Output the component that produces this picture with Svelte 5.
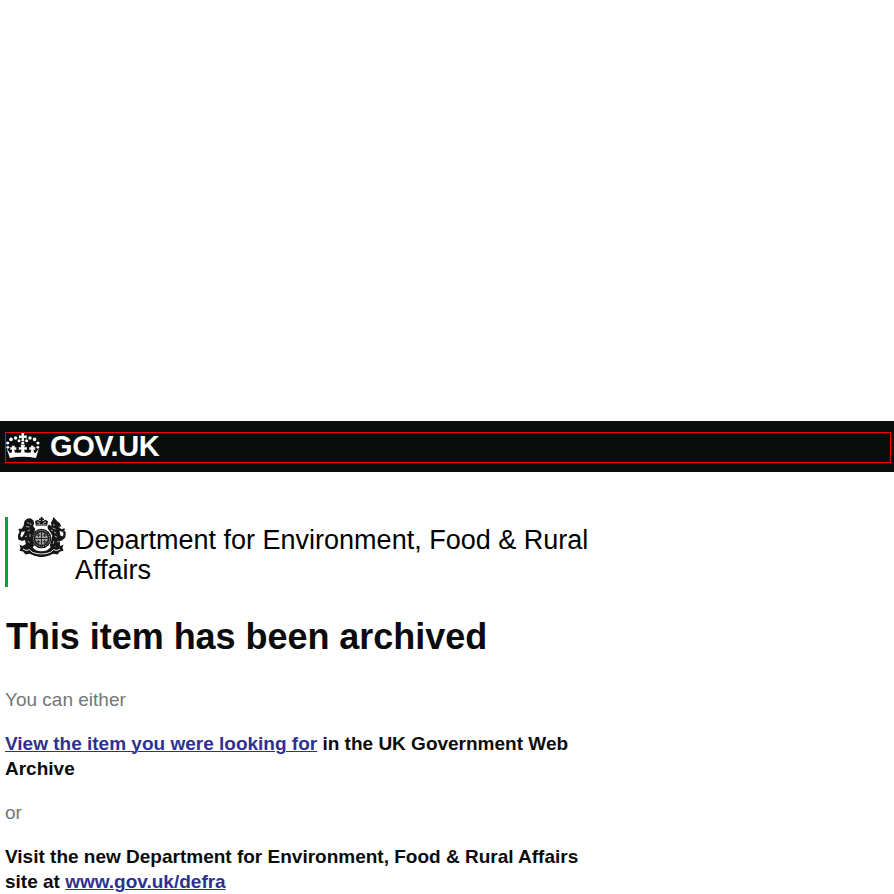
<script>
  const crownDots = [
    [1.8, 14.3, 1.4], [1.7, 10, 1.6], [5, 6.4, 1.8], [9.6, 5, 1.7], [13, 7.8, 1.5],
    [31.8, 14.3, 1.4], [31.9, 10, 1.6], [28.6, 6.4, 1.8], [24, 5, 1.7], [20.6, 7.8, 1.5],
    [16.8, 10, 1.6]
  ];
</script>

<header>
  <div class="inner">
    <svg class="crown" viewBox="0 0 34 26" width="34" height="26" fill="#fff" aria-hidden="true">
      {#each crownDots as [x, y, r]}
        <circle cx={x} cy={y} r={r} />
      {/each}
      <path d="M15.3 0h3l-.5 2.8 2.9-.6v3.2l-2.9-.6.5 3.2h-3l.5-3.2-2.9.6V2.2l2.9.6z" />
      <path d="M.6 15.5l3.4 4.5 1.7-.6.5-3-1.8.6v-3l1.9.6-.6-1.9h3.2l-.6 1.9 2-.6v3l-2-.6.6 3.2 3.1.2 2.9-.4.5-3.2-2.6.9V14l2.4.6-.6-2.8h4.4l-.6 2.8 2.4-.6v3.1l-2.6-.9.5 3.2 2.9.4 3.1-.2.6-3.2-2 .6v-3l2 .6-.6-1.9h3.2l-.6 1.9 1.9-.6v3l-1.8-.6.5 3 1.7.6 3.2-4.5-2.8 9.5Q16.8 22.6 3.8 25z" />
    </svg>
    <span class="brand">GOV.UK</span>
  </div>
</header>

<main>
  <div class="organisation">
    <svg class="crest" viewBox="0 0 48 40" width="48" height="40" fill="#161616" aria-hidden="true">
      <path d="M22.7 0h1.8v1.4H26v1.7h-1.5v1.2l2.8-1.5 2.7 1.5-1 4.7H18l-1-4.7 2.7-1.5 2.8 1.5V3.1H21V1.4h1.7z" />
      <path d="M19 5l1.8.3.8 1.5M28 5l-1.8.3-.8 1.5M18.5 8h10" fill="none" stroke="#fff" stroke-width=".8" />
      <!-- lion -->
      <path d="M6.5 4L9 1.8l3.5-.5 2.8 2 .8 3.3-1 2.5 2.2 3-1 2.8-2.3 4 1 5 1 5-3 3-3-1.5-3 1.5-1.2-2.5 2-2.5-.8-4-3 1-3.7-1.5-.5-4L1.5 15l-1-3 2-.5 1.5 2-1 3-.7 2.5 1.4 1.5L6 17l1-3-2.5 1L3 12.5 5.5 9z" />
      <path d="M9 5.5l2 .8M8 9.5l3.5.5M9.5 14l2.5-1M7 20l2-1M10 24l1.5 2M12 6l1 2M12 17v3" fill="none" stroke="#ccc" stroke-width=".8" />
      <!-- unicorn -->
      <path d="M35.5 0l4 4.5 2.2 1.5 1.5 3-1.2 1-2-.8 3.5 3 2.8-1 .7 1.4-2.4 2.4-3-1 .8 4.5 2.2 1 1-2.5-.8-2 1.5-1.5 1.5 2-.5 5-3.3 3-2.5.5.7 4-2 3-3-1.5-3 1.5-2.5-2 1.5-5.5 1-5-2.3-4-2-2.5-.4-3 2-1.5 2 2-.5-4 1.5-2.5z" />
      <path d="M35 7.5l2 .8M34.5 11l3 1M36 15l2 1M36.5 19l2.5 1M36 24l-1 3M41 24l-2 1M33 13l2 1" fill="none" stroke="#ccc" stroke-width=".8" />
      <!-- shield and garter -->
      <circle cx="23.5" cy="21.5" r="9.8" />
      <circle cx="23.5" cy="21.5" r="8.1" fill="none" stroke="#ddd" stroke-width=".8" stroke-dasharray="1.1 .9" />
      <circle cx="23.5" cy="21.5" r="6.3" fill="#a5a5a5" />
      <path d="M23.5 15.2v12.6M17.2 21.5h12.6M18.5 18.2h3.8M20.3 16.3v3.8M24.8 18.2h3.8M26.7 16.3v3.8M18.5 24.8h3.8M20.3 23v3.8M24.8 24.8h3.8M26.7 23v3.8" stroke="#222" stroke-width="1" />
      <!-- motto ribbon -->
      <path d="M1.5 27.5l3 1.5 2.5-1.5 3 2.5 3-1.2 3 3 2 1.4q5.5 2.2 11 0l2-1.4 3-3 3 1.2 3-2.5 2.5 1.5 3-1.5-1 3.5 1 2.8-3.5.7-2.5 3-4-.7-5 2q-7 2.5-14 0l-5-2-4 .7-2.5-3-3.5-.7 1-2.8z" />
      <path d="M5 32l3 1.5 3.5-.8 3 2.6q9 3.4 18 0l3-2.6 3.5.8 3-1.5" fill="none" stroke="#fff" stroke-width=".9" />
    </svg>
    <div class="name">Department for Environment, Food &amp; Rural Affairs</div>
  </div>
  <h1>This item has been archived</h1>
  <p class="quiet">You can either</p>
  <p><a href="#archive">View the item you were looking for</a> in the UK Government Web Archive</p>
  <p class="quiet">or</p>
  <p>Visit the new Department for Environment, Food &amp; Rural Affairs site at <a href="#defra">www.gov.uk/defra</a></p>
</main>

<style>
  :global(body) {
    background: #fff;
    color: #0b0c0c;
    font-family: "Liberation Sans", Arial, sans-serif;
    overflow: hidden;
  }
  header {
    margin-top: 421px;
    height: 51px;
    box-sizing: border-box;
    padding: 11px 3px 0 5px;
    background: #0b0c0c;
  }
  .inner {
    display: flex;
    box-sizing: border-box;
    height: 31px;
    border: 1px solid #f00;
  }
  .crown { display: block; }
  .brand {
    margin: -3px 0 0 10px;
    color: #fff;
    font-size: 29px;
    line-height: 33px;
    font-weight: 700;
    letter-spacing: -0.4px;
  }
  main {
    width: 590px;
    padding: 45px 0 0 5px;
  }
  .organisation {
    display: flex;
    box-sizing: border-box;
    height: 70px;
    border-left: 3px solid #00a33b;
    padding-left: 10px;
  }
  .crest { flex: none; }
  .name {
    margin: 8px 0 0 9px;
    width: 530px;
    color: #000;
    font-size: 27px;
    line-height: 30px;
  }
  h1 {
    margin: 30px 0 0 1px;
    font-size: 36px;
    line-height: 40px;
    letter-spacing: -0.04px;
  }
  p {
    margin: 19px 0 0;
    font-size: 19px;
    line-height: 25px;
    font-weight: 700;
  }
  h1 + p { margin-top: 30px; }
  .quiet { color: #6f777b; font-weight: 400; }
  a { color: #2e3191; text-underline-offset: 1px; text-decoration-thickness: 1px; }
</style>
